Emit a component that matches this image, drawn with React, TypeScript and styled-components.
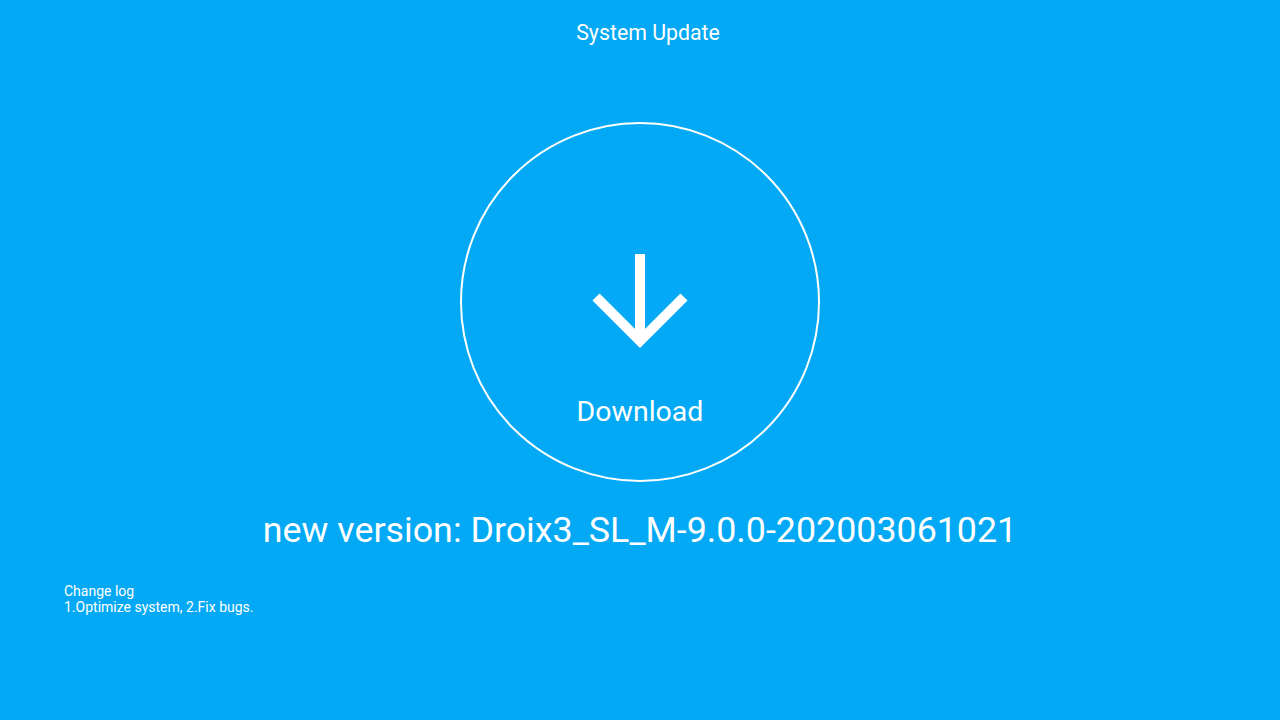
import React from "react";
import styled, { createGlobalStyle } from "styled-components";

const GlobalStyle = createGlobalStyle`
  html, body { margin: 0; padding: 0; }
  body { background: #03a9f4; font-family: Roboto, "Noto Sans", sans-serif; color: #fff; }
`;

const Page = styled.div`
  width: 1280px;
  height: 720px;
  display: flex;
  flex-direction: column;
  align-items: center;
  background: #03a9f4;
  overflow: hidden;
`;

const Title = styled.div`
  margin-top: 21px;
  margin-left: 16px;
  font-size: 21.3px;
  line-height: 24px;
  color: #fff;
`;

const Circle = styled.div`
  margin-top: 77px;
  width: 360px;
  height: 360px;
  box-sizing: border-box;
  border: 2px solid #fff;
  border-radius: 50%;
  display: flex;
  flex-direction: column;
  align-items: center;
`;

const Arrow = styled.svg`
  margin-top: 126px;
  width: 100px;
  height: 100px;
  display: block;
`;

const Label = styled.div`
  margin-top: 46px;
  font-size: 28.5px;
  line-height: 32px;
`;

const Version = styled.div`
  margin-top: 27px;
  font-size: 35.8px;
  line-height: 42px;
`;

const ChangeLog = styled.div`
  align-self: flex-start;
  margin-top: 32px;
  margin-left: 64px;
  font-size: 14px;
  line-height: 16px;
`;

export default function App() {
  return (
    <>
      <GlobalStyle />
      <Page>
        <Title>System Update</Title>
        <Circle>
          <Arrow viewBox="0 0 100 100">
            <path d="M50 4 V88" stroke="#fff" strokeWidth="10" fill="none" />
            <path d="M6 47 L50 91 L94 47" stroke="#fff" strokeWidth="10" fill="none" strokeLinejoin="miter" />
          </Arrow>
          <Label>Download</Label>
        </Circle>
        <Version>new version: Droix3_SL_M-9.0.0-202003061021</Version>
        <ChangeLog>
          Change log
          <br />
          1.Optimize system, 2.Fix bugs.
        </ChangeLog>
      </Page>
    </>
  );
}
